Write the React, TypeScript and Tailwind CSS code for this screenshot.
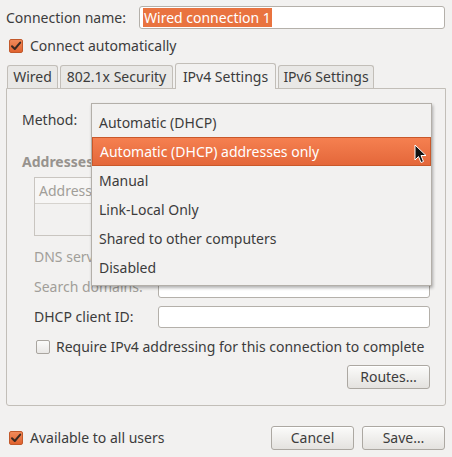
import React from 'react';

const methods = [
    'Automatic (DHCP)',
    'Automatic (DHCP) addresses only',
    'Manual',
    'Link-Local Only',
    'Shared to other computers',
    'Disabled',
];

const CheckBox: React.FC<{ checked?: boolean }> = ({ checked }) => {
    if (!checked) {
        return <span className="block w-[14px] h-[14px] rounded-[2px] border border-[#a9a59f] bg-gradient-to-b from-[#fbfbfa] to-[#e9e7e5]" />;
    }
    return (
        <span className="flex items-center justify-center w-[14px] h-[14px] rounded-[2px] border border-[#c2592b] bg-gradient-to-b from-[#f08a5a] to-[#e0622e]">
            <svg width="12" height="12" viewBox="0 0 12 12">
                <path d="M2 6.2 L4.8 9 L10.2 2.6" fill="none" stroke="#3a2a22" strokeWidth="2" strokeLinecap="round" strokeLinejoin="round" />
            </svg>
        </span>
    );
};

const Button: React.FC<{ label: string, className?: string }> = ({ label, className }) => (
    <div className={`flex items-center justify-center h-[24px] rounded-[3px] border border-[#aca8a2] bg-gradient-to-b from-[#fbfbfa] to-[#e4e2df] shadow-[inset_0_1px_0_#ffffff] ${className ?? ''}`}>
        {label}
    </div>
);

const Field: React.FC<{ className?: string }> = ({ className }) => (
    <div className={`h-[22px] rounded-[3px] border border-[#b4b0aa] bg-white ${className ?? ''}`} />
);

const App: React.FC = () => {
    return (
        <div className="relative w-[452px] h-[457px] overflow-hidden bg-[#f2f1f0] text-[#3c3c3c] text-[14px] leading-none" style={{ fontFamily: '"Noto Sans", sans-serif' }}>
            {/* Connection name */}
            <div className="flex items-center h-[23px] mt-[6px] pl-[6px] pr-[7px]">
                <span className="w-[133px]">Connection name:</span>
                <div className="flex-1 h-[23px] flex items-center px-[3px] border border-[#b4b0aa] rounded-[3px] bg-white">
                    <span className="h-[19px] flex items-center px-[1px] bg-[#e9733f] text-white">Wired connection 1</span>
                </div>
            </div>

            {/* Connect automatically */}
            <div className="flex items-center gap-[7px] h-[16px] mt-[9px] pl-[9px]">
                <CheckBox checked />
                <span>Connect automatically</span>
            </div>

            {/* Tabs */}
            <div className="flex items-end gap-[2px] h-[26px] mt-[8px] pl-[7px]">
                <div className="w-[51px] h-[23px] flex items-center justify-center border border-b-0 border-[#c2beb8] rounded-t-[3px] bg-[#e9e8e6]">Wired</div>
                <div className="w-[113px] h-[23px] flex items-center justify-center border border-b-0 border-[#c2beb8] rounded-t-[3px] bg-[#e9e8e6]">802.1x Security</div>
                <div className="relative z-10 -mb-px w-[101px] h-[26px] flex items-center justify-center border border-b-0 border-[#c2beb8] rounded-t-[3px] bg-[#f2f1f0]">IPv4 Settings</div>
                <div className="w-[96px] h-[23px] flex items-center justify-center border border-b-0 border-[#c2beb8] rounded-t-[3px] bg-[#e9e8e6]">IPv6 Settings</div>
            </div>

            {/* Tab panel */}
            <div className="relative mx-[6px] h-[318px] border border-[#c2beb8] rounded-b-[3px] px-[15px]">
                <div className="flex items-center h-[28px] mt-[17px]">
                    <span>Method:</span>
                </div>

                <div className="mt-[19px] h-[18px] flex items-center font-bold text-[#97938e]">Addresses</div>

                <div className="ml-[12px] mt-[6px] h-[59px] border border-[#c9c5c0] bg-[#f2f1f0]">
                    <div className="h-[26px] flex items-center pl-[4px] border-b border-[#d6d3ce] bg-[#f7f6f5] text-[#a19e99]">Address</div>
                </div>

                <div className="flex items-center h-[22px] mt-[10px] pl-[12px]">
                    <span className="w-[124px] text-[#a19e99]">DNS servers:</span>
                    <Field className="flex-1" />
                </div>
                <div className="flex items-center h-[22px] mt-[8px] pl-[12px]">
                    <span className="w-[124px] text-[#a19e99]">Search domains:</span>
                    <Field className="flex-1" />
                </div>
                <div className="flex items-center h-[22px] mt-[8px] pl-[12px]">
                    <span className="w-[124px]">DHCP client ID:</span>
                    <Field className="flex-1" />
                </div>

                <div className="flex items-center gap-[6px] h-[20px] mt-[9px] pl-[14px]">
                    <CheckBox />
                    <span>Require IPv4 addressing for this connection to complete</span>
                </div>

                <div className="flex justify-end mt-[8px]">
                    <Button label="Routes…" className="w-[83px]" />
                </div>

                {/* Method dropdown popup */}
                <div className="absolute left-[84px] top-[14px] w-[341px] h-[183px] py-[4px] border border-[#b3afa9] bg-[#f2f1f0] shadow-[1px_2px_3px_rgba(0,0,0,0.3)]">
                    {methods.map((m, i) => (
                        <div
                            key={m}
                            className={i === 1
                                ? 'relative h-[29px] flex items-center pl-[7px] text-white border border-[#c9582a] bg-gradient-to-b from-[#f58050] to-[#e4673a]'
                                : 'h-[29px] flex items-center pl-[7px]'}
                        >
                            {m}
                            {i === 1 && (
                                <svg className="absolute left-[321px] top-[6px]" width="13" height="20" viewBox="0 0 13 20">
                                    <path d="M1 1 L1 16 L4.5 12.5 L7 18.5 L9.5 17.5 L7 11.5 L12 11.5 Z" fill="#111" stroke="#fff" strokeWidth="1" strokeLinejoin="round" />
                                </svg>
                            )}
                        </div>
                    ))}
                </div>
            </div>

            {/* Bottom bar */}
            <div className="flex items-center h-[24px] mt-[20px] pl-[9px] pr-[7px]">
                <CheckBox checked />
                <span className="ml-[7px]">Available to all users</span>
                <div className="flex-1" />
                <Button label="Cancel" className="w-[83px]" />
                <Button label="Save…" className="w-[83px] ml-[8px]" />
            </div>
        </div>
    );
};

export default App;
